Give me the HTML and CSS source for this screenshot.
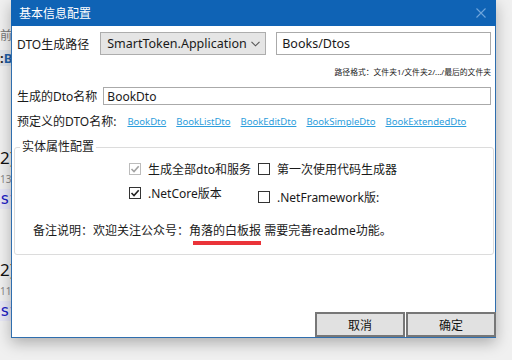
FILE: index.html
```html
<!DOCTYPE html>
<html lang="zh-CN">
<head>
  <meta charset="UTF-8">
  <title>基本信息配置</title>
  <link rel="stylesheet" href="styles.css">
</head>
<body>

  <div class="backdrop">
    <div class="bd-line bd-grey bd-first">前</div>
    <div class="bd-line bd-band"><b>:</b><span class="bd-blue">B</span></div>
    <div class="bd-line bd-big bd-gap">2)</div>
    <div class="bd-line bd-small">13</div>
    <div class="bd-line bd-code">st</div>
    <div class="bd-line bd-big bd-gap2">2)</div>
    <div class="bd-line bd-small">11</div>
    <div class="bd-line bd-code">st</div>
  </div>

  <div class="dialog">
    <div class="titlebar">
      <span class="title">基本信息配置</span>
      <svg class="close" width="10" height="10" viewBox="0 0 10 10">
        <path d="M0.5 0.5 L9.5 9.5 M9.5 0.5 L0.5 9.5" stroke="#6fa6dc" stroke-width="1.1" fill="none"/>
      </svg>
    </div>

    <div class="content">
      <div class="row path-row">
        <label class="lbl">DTO生成路径</label>
        <div class="select">
          <span>SmartToken.Application</span>
          <svg width="9" height="6" viewBox="0 0 9 6"><path d="M0.5 0.8 L4.5 4.8 L8.5 0.8" stroke="#555" stroke-width="1.1" fill="none"/></svg>
        </div>
        <div class="input path-input">Books/Dtos</div>
      </div>
      <div class="hint">路径格式：文件夹1/文件夹2/.../最后的文件夹</div>

      <div class="row name-row">
        <label class="lbl">生成的Dto名称</label>
        <div class="input name-input">BookDto</div>
      </div>

      <div class="row presets">
        <label class="lbl">预定义的DTO名称:</label>
        <div class="links">
          <a href="#">BookDto</a>
          <a href="#">BookListDto</a>
          <a href="#">BookEditDto</a>
          <a href="#">BookSimpleDto</a>
          <a href="#">BookExtendedDto</a>
        </div>
      </div>

      <fieldset class="group">
        <legend>实体属性配置</legend>
        <div class="checks">
          <div class="check disabled">
            <span class="box"><svg width="10" height="10" viewBox="0 0 10 10"><path d="M1.5 5 L4 7.5 L8.7 2.2" stroke="#a2a2a2" stroke-width="1.6" fill="none"/></svg></span>
            生成全部dto和服务
          </div>
          <div class="check">
            <span class="box"></span>
            第一次使用代码生成器
          </div>
          <div class="check">
            <span class="box"><svg width="10" height="10" viewBox="0 0 10 10"><path d="M1.5 5 L4 7.5 L8.7 2.2" stroke="#222" stroke-width="1.6" fill="none"/></svg></span>
            .NetCore版本
          </div>
          <div class="check lower">
            <span class="box"></span>
            .NetFramework版:
          </div>
        </div>
        <p class="note">备注说明：欢迎关注公众号：<span class="mark">角落的白板报</span> 需要完善readme功能。</p>
      </fieldset>
    </div>

    <div class="footer">
      <button class="btn">取消</button>
      <button class="btn">确定</button>
    </div>
  </div>

</body>
</html>
```

FILE: styles.css
```css
body {
  margin: 0;
  width: 512px;
  height: 360px;
  overflow: hidden;
  background-color: #f0f0f0;
  font-family: "Noto Sans", "Noto Sans CJK SC", sans-serif;
  position: relative;
}

/* what lies behind the dialog */
.backdrop {
  width: 60px;
  padding-top: 29px;
}

.bd-line {
  white-space: nowrap;
  line-height: 14px;
}

.bd-grey {
  color: #777;
  font-size: 12px;
}

.bd-band {
  margin-top: 7px;
  height: 16px;
  line-height: 16px;
  background-color: #e1e5ea;
  font-size: 13px;
  color: #222;
}

.bd-blue {
  color: #1d5fa8;
  font-weight: bold;
}

.bd-big {
  font-size: 17px;
  line-height: 18px;
  color: #111;
}

.bd-gap {
  margin-top: 83px;
}

.bd-gap2 {
  margin-top: 52px;
}

.bd-small {
  font-size: 10px;
  color: #888;
  line-height: 12px;
  margin-top: 6px;
}

.bd-code {
  margin-top: 4px;
  font-family: "DejaVu Sans Mono", monospace;
  font-size: 16px;
  line-height: 20px;
  color: #1c1cc4;
  background-color: #e7e7f6;
}

/* dialog window */
.dialog {
  position: absolute;
  left: 11px;
  top: 0;
  width: 485px;
  height: 338px;
  box-sizing: border-box;
  background: #fff;
  border: 1px solid #2f6eae;
  border-top: none;
  box-shadow: 0 5px 14px rgba(0, 0, 0, 0.28);
  display: flex;
  flex-direction: column;
}

.titlebar {
  height: 26px;
  background-color: #0f63b5;
  display: flex;
  align-items: center;
  justify-content: space-between;
  padding: 0 10px 0 8px;
  margin: 0 -1px;
}

.title {
  color: #fff;
  font-size: 12px;
}

.content {
  flex: 1;
  padding: 6px 4px 0 5px;
  font-size: 12px;
  color: #1a1a1a;
}

.row {
  display: flex;
  align-items: center;
}

.lbl {
  white-space: nowrap;
}

.path-row {
  height: 23px;
}

.select {
  margin-left: 11px;
  width: 166px;
  height: 23px;
  box-sizing: border-box;
  background-color: #e5e5e5;
  border: 1px solid #adadad;
  display: flex;
  align-items: center;
  justify-content: space-between;
  padding: 0 5px 0 6px;
  font-size: 12.5px;
}

.input {
  height: 100%;
  box-sizing: border-box;
  border: 1px solid #aaa;
  background: #fff;
  display: flex;
  align-items: center;
  padding-left: 5px;
}

.path-input {
  margin-left: 10px;
  flex: 1;
  font-size: 12.5px;
}

.hint {
  margin-top: 12px;
  text-align: right;
  font-size: 7.8px;
  line-height: 10px;
  color: #222;
}

.name-row {
  margin-top: 10px;
  height: 18px;
}

.name-input {
  margin-left: 6px;
  flex: 1;
  padding-left: 3px;
}

.presets {
  margin-top: 8px;
  height: 16px;
}

.links {
  display: flex;
  gap: 10px;
  margin-left: 11px;
}

.links a {
  font-size: 9.5px;
  color: #2c9ddc;
}

.group {
  margin: 10px -3px 0 -3px;
  padding: 0 0 14px 0;
  border: 1px solid #dcdcdc;
  border-radius: 3px;
}

.group legend {
  margin-left: 5px;
  padding: 0 2px;
  line-height: 16px;
}

.checks {
  display: grid;
  grid-template-columns: 129px auto;
  row-gap: 6px;
  margin: 5px 0 0 114px;
}

.check {
  display: flex;
  align-items: center;
  gap: 7px;
  height: 18px;
}

.check.disabled .box {
  border-color: #bcbcbc;
}

.check.lower {
  margin-top: 4px;
}

.box {
  width: 12px;
  height: 12px;
  box-sizing: border-box;
  border: 1px solid #333;
  display: flex;
  align-items: center;
  justify-content: center;
}

.note {
  margin: 16px 0 0 18px;
  line-height: 18px;
}

.mark {
  position: relative;
}

.mark::after {
  content: "";
  position: absolute;
  left: 4px;
  right: 0;
  bottom: -6px;
  height: 4px;
  background-color: #ea3339;
}

.footer {
  display: flex;
  justify-content: flex-end;
  gap: 1px;
  margin-right: -1px;
}

.btn {
  width: 90px;
  height: 25px;
  background-color: #e1e1e1;
  border: 2px solid #777;
  font-family: "Noto Sans CJK SC", sans-serif;
  font-size: 12px;
  color: #111;
}
```
